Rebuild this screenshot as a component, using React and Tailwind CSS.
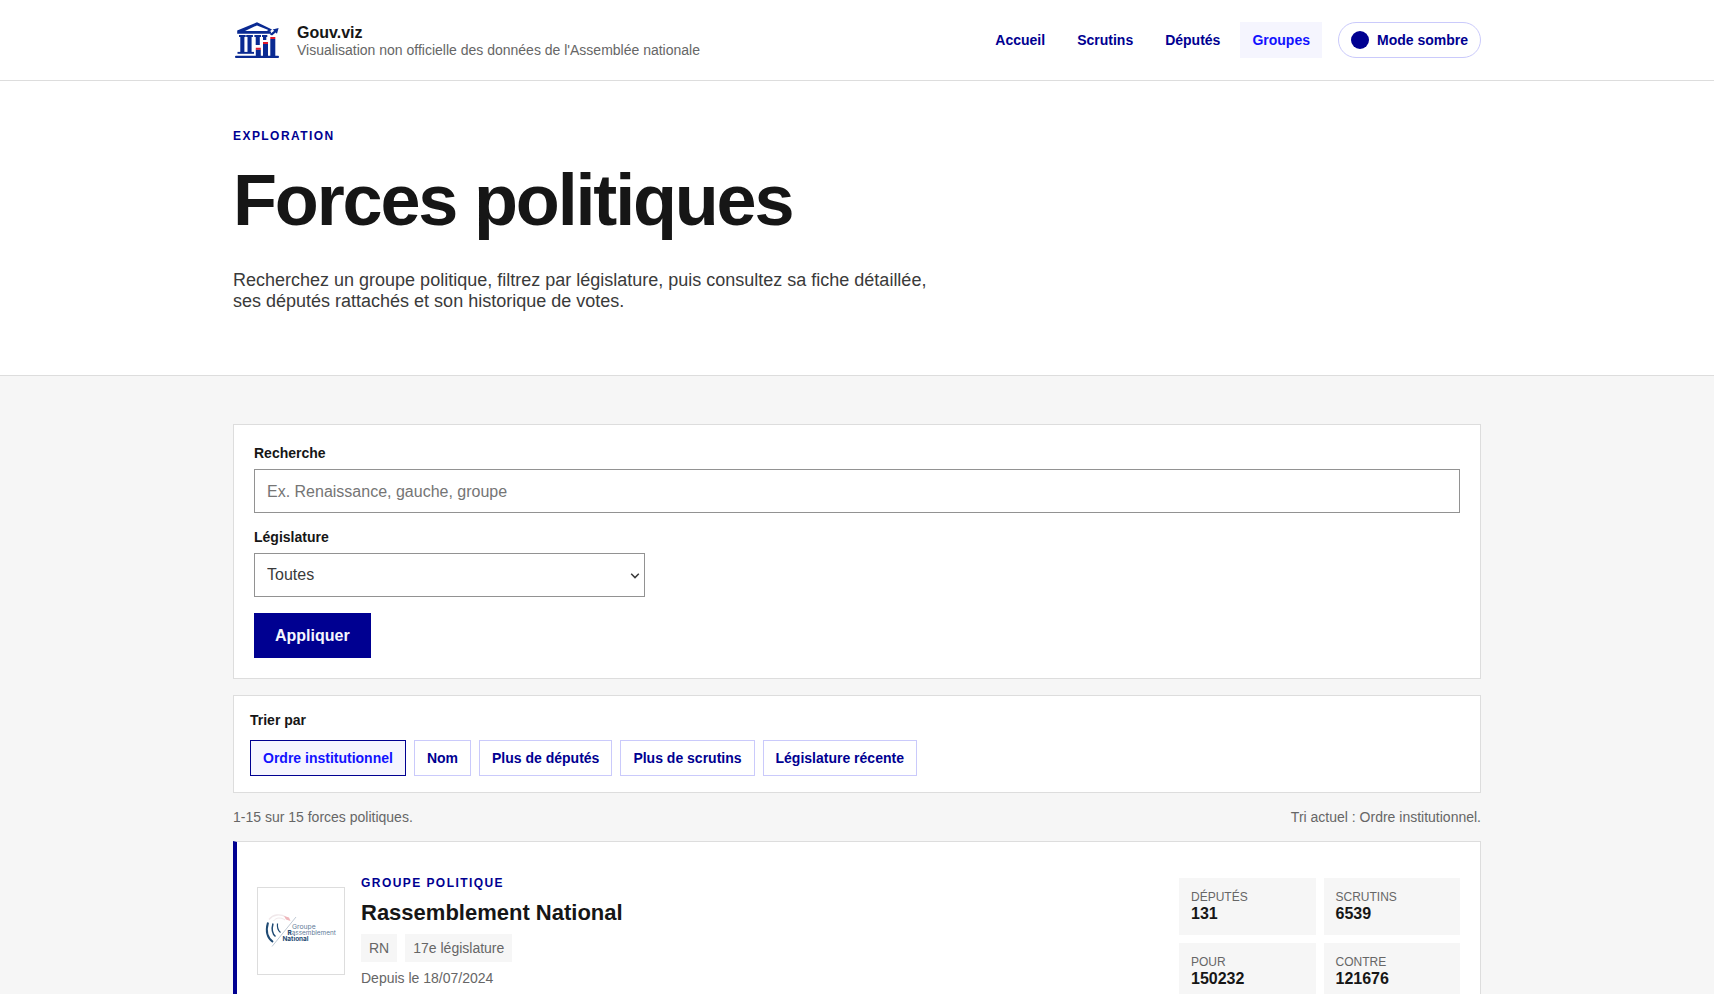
import React, { useState } from 'react';

const navLinks = ['Accueil', 'Scrutins', 'Députés', 'Groupes'];

const sortOptions = [
  'Ordre institutionnel',
  'Nom',
  'Plus de députés',
  'Plus de scrutins',
  'Législature récente'
];

const groups = [
  {
    name: 'Rassemblement National',
    code: 'RN',
    legislature: '17e législature',
    since: '18/07/2024',
    stats: [
      { label: 'Députés', value: 131 },
      { label: 'Scrutins', value: 6539 },
      { label: 'Pour', value: 150232 },
      { label: 'Contre', value: 121676 }
    ]
  }
];

const SiteLogo = () => (
  <svg viewBox="0 0 48 48" className="size-12 shrink-0" aria-hidden="true">
    <g fill="#0a2a92">
      {/* Roof */}
      <path fillRule="evenodd" d="M24 6.3 39 13.4 36.5 15.6 H38 V17.8 H4.2 V14.6Z M24 9.4 12 14.9 H33.8 L35.4 14Z" />
      {/* Columns */}
      <path d="M6 19h6.7v1.9h-1.3V36H7.3V20.9H6z M13.2 19h6.7v1.9h-1.3V36h-4.1V20.900h-1.300z M21.400 19h6.600v1.900h-1.200V29h-4.100v-8.100h-1.300z M29 19h5.300v1.900h-1V24h-3.300v-3.100h-1z" />
      <path d="M4.500 35.900H21v1.900H4.500z" />
      <rect x="2" y="39.700" width="44" height="2.200" rx="1" />
      {/* Chart bars */}
      <path d="M22.800 33.500h5V40h-5z M30 28h5v12h-5z M37.300 23h5v17h-5z" />
      {/* Arrow */}
      <path d="M36.800 18.200 41.200 14.800 39.600 13.400 45.600 12 44 17.800 42.600 16.400 39 19.400Z" />
    </g>
    <path fill="#e1182b" d="M22.800 31.700h5v2.100h-5z M30 26h5v2.100h-5z M37.300 21h5v2.100h-5z" />
  </svg>
);

const GroupLogo = () => (
  <svg viewBox="0 0 86 86" className="size-full" role="img" aria-label="Groupe Rassemblement National">
    <g fill="none" strokeLinecap="butt">
      <path d="M10 34.500C7.500 43 9.500 50 15 54" stroke="#1f4a73" strokeWidth="2" />
      <path d="M15 35.500C13.500 41 14.500 46 17.500 48.500" stroke="#1f4a73" strokeWidth="1.500" />
      <path d="M19.500 35.500C19 39.500 20 42.500 22.500 44.500" stroke="#1f4a73" strokeWidth="1.200" />
      <path d="M11 31.500C15 26.500 22 25.500 28 29" stroke="#f0e8ea" strokeWidth="1.400" />
      <path d="M15.500 33C18 29.500 23 29 27 32" stroke="#f0e8ea" strokeWidth="1" />
      <path d="M38 29 14 58.500" stroke="#a3b2c2" strokeWidth="0.700" />
    </g>
    <path d="M26 28 31 29.500 32.500 33 28 31.500Z" fill="#efb6bb" />
    <g fontFamily="Inter, 'Open Sans', sans-serif" fill="#5f7c99">
      <text x="34" y="40.500" fontSize="6.800">Groupe</text>
      <text x="29.500" y="46.800" fontSize="6.400"><tspan fontWeight="800" fill="#1f4a73">R</tspan>assemblement</text>
      <text x="24.500" y="52.900" fontSize="6.400" fontWeight="700" fill="#1f4a73">National</text>
    </g>
  </svg>
);

const Eyebrow = ({ children }) => (
  <p className="text-xs leading-[14px] font-bold uppercase tracking-[0.12em] text-[#000091]">{children}</p>
);

const Header = () => (
  <header className="border-b border-[#dddddd] bg-white">
    <div className="mx-auto flex h-20 max-w-7xl items-center justify-between px-4">
      <a href="#" className="flex items-center gap-4">
        <SiteLogo />
        <span className="flex flex-col pt-0.5">
          <span className="text-base leading-[18px] font-bold text-[#161616]">Gouv.viz</span>
          <span className="text-sm leading-4 text-[#666666]">
            Visualisation non officielle des données de l'Assemblée nationale
          </span>
        </span>
      </a>
      <div className="flex items-center gap-4">
        <nav className="flex gap-2 text-sm leading-4 font-bold">
          {navLinks.map((link) => (
            <a
              key={link}
              href="#"
              className={`px-3 py-2.5 ${link === 'Groupes' ? 'bg-[#f5f5fe] text-[#1212ff]' : 'text-[#000091]'}`}
            >
              {link}
            </a>
          ))}
        </nav>
        <button
          type="button"
          className="flex h-9 items-center gap-2 rounded-full border border-[#cacafb] px-3 text-sm leading-4 font-bold text-[#000091]"
        >
          <span className="size-[18px] rounded-full bg-[#000091]" />
          Mode sombre
        </button>
      </div>
    </div>
  </header>
);

const FilterForm = () => (
  <form
    className="grid grid-cols-3 gap-4 border border-[#dddddd] bg-white p-5"
    onSubmit={(e) => e.preventDefault()}
  >
    <div className="col-span-3 flex flex-col gap-2">
      <label htmlFor="search" className="text-sm leading-4 font-bold text-[#161616]">Recherche</label>
      <input
        id="search"
        type="search"
        placeholder="Ex. Renaissance, gauche, groupe"
        className="h-11 w-full border border-[#929292] bg-white px-3 pt-0.5 text-base text-[#3a3a3a] placeholder:text-[#757575]"
      />
    </div>
    <div className="flex flex-col gap-2">
      <label htmlFor="legislature" className="text-sm leading-4 font-bold text-[#161616]">Législature</label>
      <div className="relative">
        <select
          id="legislature"
          className="block h-11 w-full appearance-none border border-[#929292] bg-white px-3 text-base text-[#3a3a3a]"
        >
          <option>Toutes</option>
          <option>17e législature</option>
        </select>
        <svg viewBox="0 0 10 6" className="pointer-events-none absolute top-5 right-[5px] h-1.5 w-2.5" aria-hidden="true">
          <path d="M1.2 0.8 5 4.6 8.800 0.800" fill="none" stroke="#3a3a3a" strokeWidth="1.500" />
        </svg>
      </div>
    </div>
    <div className="col-span-3">
      <button type="submit" className="block h-[45px] border border-[#000091] bg-[#000091] px-5 text-base font-bold text-[#f5f5fe]">
        Appliquer
      </button>
    </div>
  </form>
);

const GroupCard = ({ group }) => (
  <article className="flex items-start justify-between gap-6 border border-l-4 border-[#dddddd] border-l-[#000091] bg-white p-5">
    <div className="mt-3.5 flex items-center gap-4">
      <div className="size-[88px] shrink-0 border border-[#dddddd] bg-white">
        <GroupLogo />
      </div>
      <div>
        <Eyebrow>Groupe politique</Eyebrow>
        <h2 className="mt-2.5 text-[22px] leading-[26px] font-bold text-[#161616]">{group.name}</h2>
        <div className="mt-2 flex gap-2 text-sm leading-4 text-[#666666]">
          <span className="bg-[#f6f6f6] px-2 py-1.5">{group.code}</span>
          <span className="bg-[#f6f6f6] px-2 py-1.5">{group.legislature}</span>
        </div>
        <p className="mt-2 text-sm leading-4 text-[#666666]">Depuis le {group.since}</p>
      </div>
    </div>
    <dl className="mt-4 grid w-[281px] shrink-0 grid-cols-2 gap-2">
      {group.stats.map((stat) => (
        <div key={stat.label} className="bg-[#f6f6f6] p-3">
          <dt className="text-xs leading-[14px] uppercase text-[#666666]">{stat.label}</dt>
          <dd className="text-base leading-[19px] font-bold text-[#161616]">{stat.value}</dd>
        </div>
      ))}
    </dl>
  </article>
);

const App = () => {
  const [sort, setSort] = useState(sortOptions[0]);

  return (
    <div className="min-h-screen bg-[#f6f6f6] font-['Liberation_Sans',Arial,sans-serif]">
      <Header />

      {/* Hero */}
      <section className="border-b border-[#dddddd] bg-white">
        <div className="mx-auto max-w-7xl px-4 pt-12 pb-[63px]">
          <Eyebrow>Exploration</Eyebrow>
          <h1 className="mt-5 text-7xl leading-[74px] font-bold tracking-[-0.03em] text-[#161616]">Forces politiques</h1>
          <p className="mt-[33px] max-w-[720px] text-lg leading-[21px] text-[#3a3a3a]">
            Recherchez un groupe politique, filtrez par législature, puis consultez sa fiche détaillée, ses députés
            rattachés et son historique de votes.
          </p>
        </div>
      </section>

      <main className="mx-auto flex max-w-7xl flex-col gap-4 px-4 py-12">
        <FilterForm />

        {/* Sort bar */}
        <section className="flex flex-col gap-3 border border-[#dddddd] bg-white p-4">
          <h2 className="text-sm leading-4 font-bold text-[#161616]">Trier par</h2>
          <div className="flex flex-wrap gap-2">
            {sortOptions.map((option) => (
              <button
                key={option}
                type="button"
                onClick={() => setSort(option)}
                className={`h-9 border px-3 text-sm leading-4 font-bold ${
                  sort === option
                    ? 'border-[#000091] bg-[#f5f5fe] text-[#1212ff]'
                    : 'border-[#cacafb] bg-white text-[#000091]'
                }`}
              >
                {option}
              </button>
            ))}
          </div>
        </section>

        <div className="flex justify-between text-sm leading-4 text-[#666666]">
          <p>1-15 sur 15 forces politiques.</p>
          <p>Tri actuel : {sort}.</p>
        </div>

        {groups.map((group) => (
          <GroupCard key={group.code} group={group} />
        ))}
      </main>
    </div>
  );
};

export default App;
